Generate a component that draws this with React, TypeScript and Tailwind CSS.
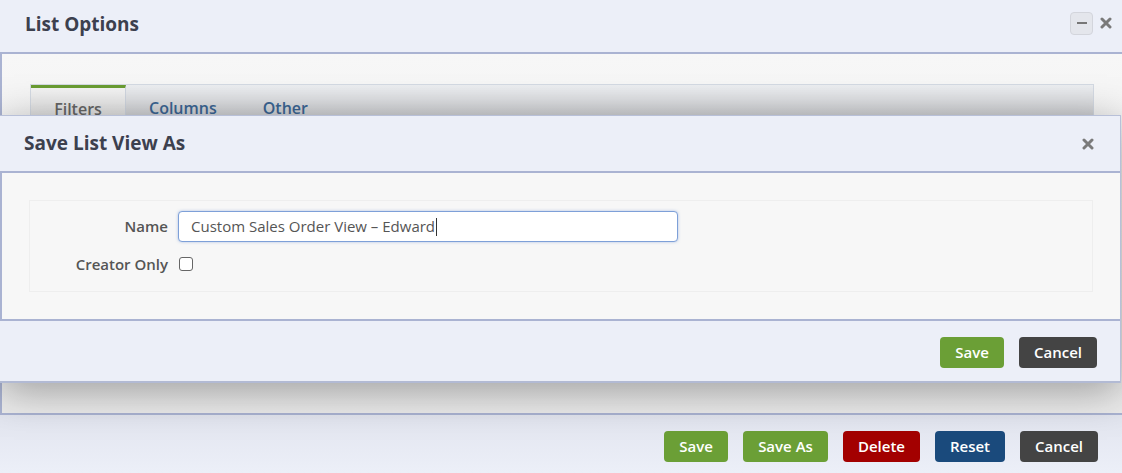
import React from "react";

const font = { fontFamily: '"Open Sans", "Noto Sans", sans-serif' };

function Btn({ label, cls, w }: { label: string; cls: string; w: string }) {
  return (
    <button
      className={`h-[31px] ${w} rounded-[4px] text-white text-[15px] font-semibold flex items-center justify-center ${cls}`}
    >
      {label}
    </button>
  );
}

function CloseX() {
  return (
    <svg width="12" height="12" viewBox="0 0 12 12">
      <path d="M2 2 L10 10 M10 2 L2 10" stroke="#7a7a7a" strokeWidth="3" strokeLinecap="round" />
    </svg>
  );
}

export default function App() {
  return (
    <div style={font} className="relative w-[1122px] h-[473px] overflow-hidden bg-[#eceff8]">
      {/* Base dialog: List Options */}
      <div className="flex flex-col h-full">
        <div className="h-[52px] flex items-center justify-between pl-[25px] pr-[10px] bg-[#eceff8]">
          <div className="text-[19px] font-bold text-[#3c404e] -mt-[3px]">List Options</div>
          <div className="flex items-center gap-[7px] -mt-[6px]">
            <div className="w-[23px] h-[23px] rounded-[4px] border border-[#d3d5dc] bg-[#e4e6ec] flex items-center justify-center">
              <div className="w-[10px] h-[2px] bg-[#777]" />
            </div>
            <CloseX />
          </div>
        </div>
        <div className="h-[363px] border-t-2 border-b-2 border-l-2 border-[#aab3d2] bg-gradient-to-b from-[#f7f7f7] to-[#ececec] pt-[30px] pl-[28px] pr-[28px]">
          <div className="h-[40px] border border-[#d3d9e2] bg-gradient-to-b from-[#eceef1] to-[#c9cacd] flex items-end">
            <div className="h-full w-[95px] border-t-[3px] border-t-[#6a9c32] border-r border-r-[#cfd5df] bg-gradient-to-b from-[#f3f3f3] to-[#dcdcdc] flex items-start justify-center pt-[9px] text-[16px] font-semibold text-[#666]">
              Filters
            </div>
            <div className="h-full flex items-start pt-[11px] pl-[23px] gap-[46px] text-[16px] font-semibold text-[#3b6593]">
              <span>Columns</span>
              <span>Other</span>
            </div>
          </div>
        </div>
        <div className="flex-1 bg-gradient-to-b from-[#e2e5ef] to-[#eceff8] flex items-start justify-end gap-[15px] pt-[16px] pr-[24px]">
          <Btn label="Save" w="w-[64px]" cls="bg-[#6b9f36]" />
          <Btn label="Save As" w="w-[85px]" cls="bg-[#6b9f36]" />
          <Btn label="Delete" w="w-[77px]" cls="bg-[#a30000]" />
          <Btn label="Reset" w="w-[70px]" cls="bg-[#1a4a7c]" />
          <Btn label="Cancel" w="w-[78px]" cls="bg-[#444444]" />
        </div>
      </div>

      {/* Overlay modal: Save List View As */}
      <div className="absolute left-0 top-[115px] w-[1121px] flex flex-col border-r border-t border-[#b8c0d8] shadow-[0_8px_40px_rgba(0,0,0,0.35)]">
        <div className="h-[55px] bg-[#eceff8] flex items-center justify-between pl-[24px] pr-[26px]">
          <div className="text-[19px] font-bold text-[#3c404e]">Save List View As</div>
          <CloseX />
        </div>
        <div className="h-[150px] border-t-2 border-b-2 border-l-2 border-[#aab3d2] bg-[#f7f7f7] pt-[27px] pl-[27px] pr-[27px]">
          <div className="h-[92px] border border-[#eeeeee] flex flex-col pt-[10px] gap-[12px]">
            <div className="flex items-center">
              <div className="w-[138px] text-right text-[15px] font-semibold text-[#555]">Name</div>
              <div className="ml-[10px] w-[500px] h-[31px] rounded-[4px] border border-[#7ea0d8] bg-white shadow-[0_0_3px_rgba(100,140,210,0.5)] flex items-center pl-[12px] text-[15px] text-[#555]">
                Custom Sales Order View – Edward
                <span className="inline-block w-[1px] h-[18px] bg-[#333] ml-[1px]" />
              </div>
            </div>
            <div className="flex items-center -mt-[1px]">
              <div className="w-[138px] text-right text-[15px] font-semibold text-[#555]">Creator Only</div>
              <div className="ml-[11px] w-[14px] h-[14px] rounded-[3px] border border-[#666] bg-white" />
            </div>
          </div>
        </div>
        <div className="h-[62px] bg-[#eceff8] border-b-2 border-[#b2bad4] flex items-center justify-end gap-[15px] pr-[23px] pt-[2px]">
          <Btn label="Save" w="w-[64px]" cls="bg-[#6b9f36]" />
          <Btn label="Cancel" w="w-[78px]" cls="bg-[#444444]" />
        </div>
      </div>
    </div>
  );
}
